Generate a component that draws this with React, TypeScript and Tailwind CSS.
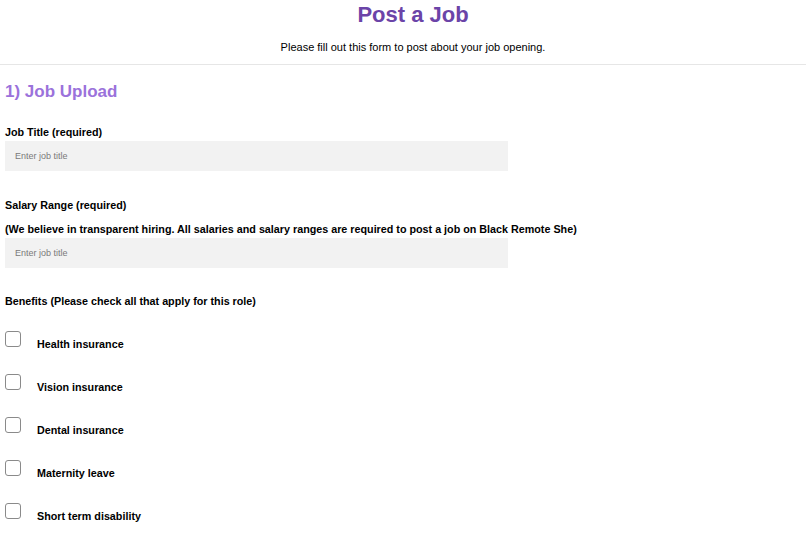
import { useState } from "react";

const BENEFITS = [
  "Health insurance",
  "Vision insurance",
  "Dental insurance",
  "Maternity leave",
  "Short term disability",
];

function Field({ placeholder }: { placeholder: string }) {
  return (
    <input
      type="text"
      placeholder={placeholder}
      className="mt-[2px] block h-[30px] w-[503px] bg-[#f2f2f2] px-[10px] text-[9px] text-black outline-none placeholder:text-[#7a7a7a]"
    />
  );
}

export default function App() {
  const [checked, setChecked] = useState<Record<string, boolean>>({});

  return (
    <div
      className="min-h-screen bg-white text-black"
      style={{ fontFamily: '"Liberation Sans", Arial, sans-serif' }}
    >
      <header className="border-b border-[#e6e6e6] pb-[9px] pl-[20px] text-center">
        <h1 className="text-[22px] font-bold leading-[30px] text-[#6b44a8]">Post a Job</h1>
        <p className="mt-[9px] text-[11px] leading-[16px]">
          Please fill out this form to post about your job opening.
        </p>
      </header>

      <main className="px-[5px]">
        <h2 className="mt-[15px] text-[17px] font-bold leading-[24px] text-[#9b72db]">
          1) Job Upload
        </h2>

        <label className="mt-[21px] block text-[10.75px] font-bold leading-[14px]">
          Job Title (required)
        </label>
        <Field placeholder="Enter job title" />

        <label className="mt-[27px] block text-[10.75px] font-bold leading-[14px]">
          Salary Range (required)
        </label>
        <p className="mt-[10px] text-[10.75px] font-bold leading-[14px]">
          (We believe in transparent hiring. All salaries and salary ranges are required to post a
          job on Black Remote She)
        </p>
        <Field placeholder="Enter job title" />

        <p className="mt-[26px] text-[10.75px] font-bold leading-[14px]">
          Benefits (Please check all that apply for this role)
        </p>

        <ul className="mt-[23px] flex flex-col gap-[23px]">
          {BENEFITS.map((b) => (
            <li key={b} className="flex h-[20px] items-start">
              <button
                type="button"
                onClick={() => setChecked({ ...checked, [b]: !checked[b] })}
                className="h-[16px] w-[16px] shrink-0 rounded-[3px] border border-[#8a8a8a] bg-white"
              >
                {checked[b] && <span className="block text-[11px] leading-[14px]">✓</span>}
              </button>
              <span className="ml-[16px] mt-[6px] text-[10.75px] font-bold leading-[14px]">{b}</span>
            </li>
          ))}
        </ul>
      </main>
    </div>
  );
}
